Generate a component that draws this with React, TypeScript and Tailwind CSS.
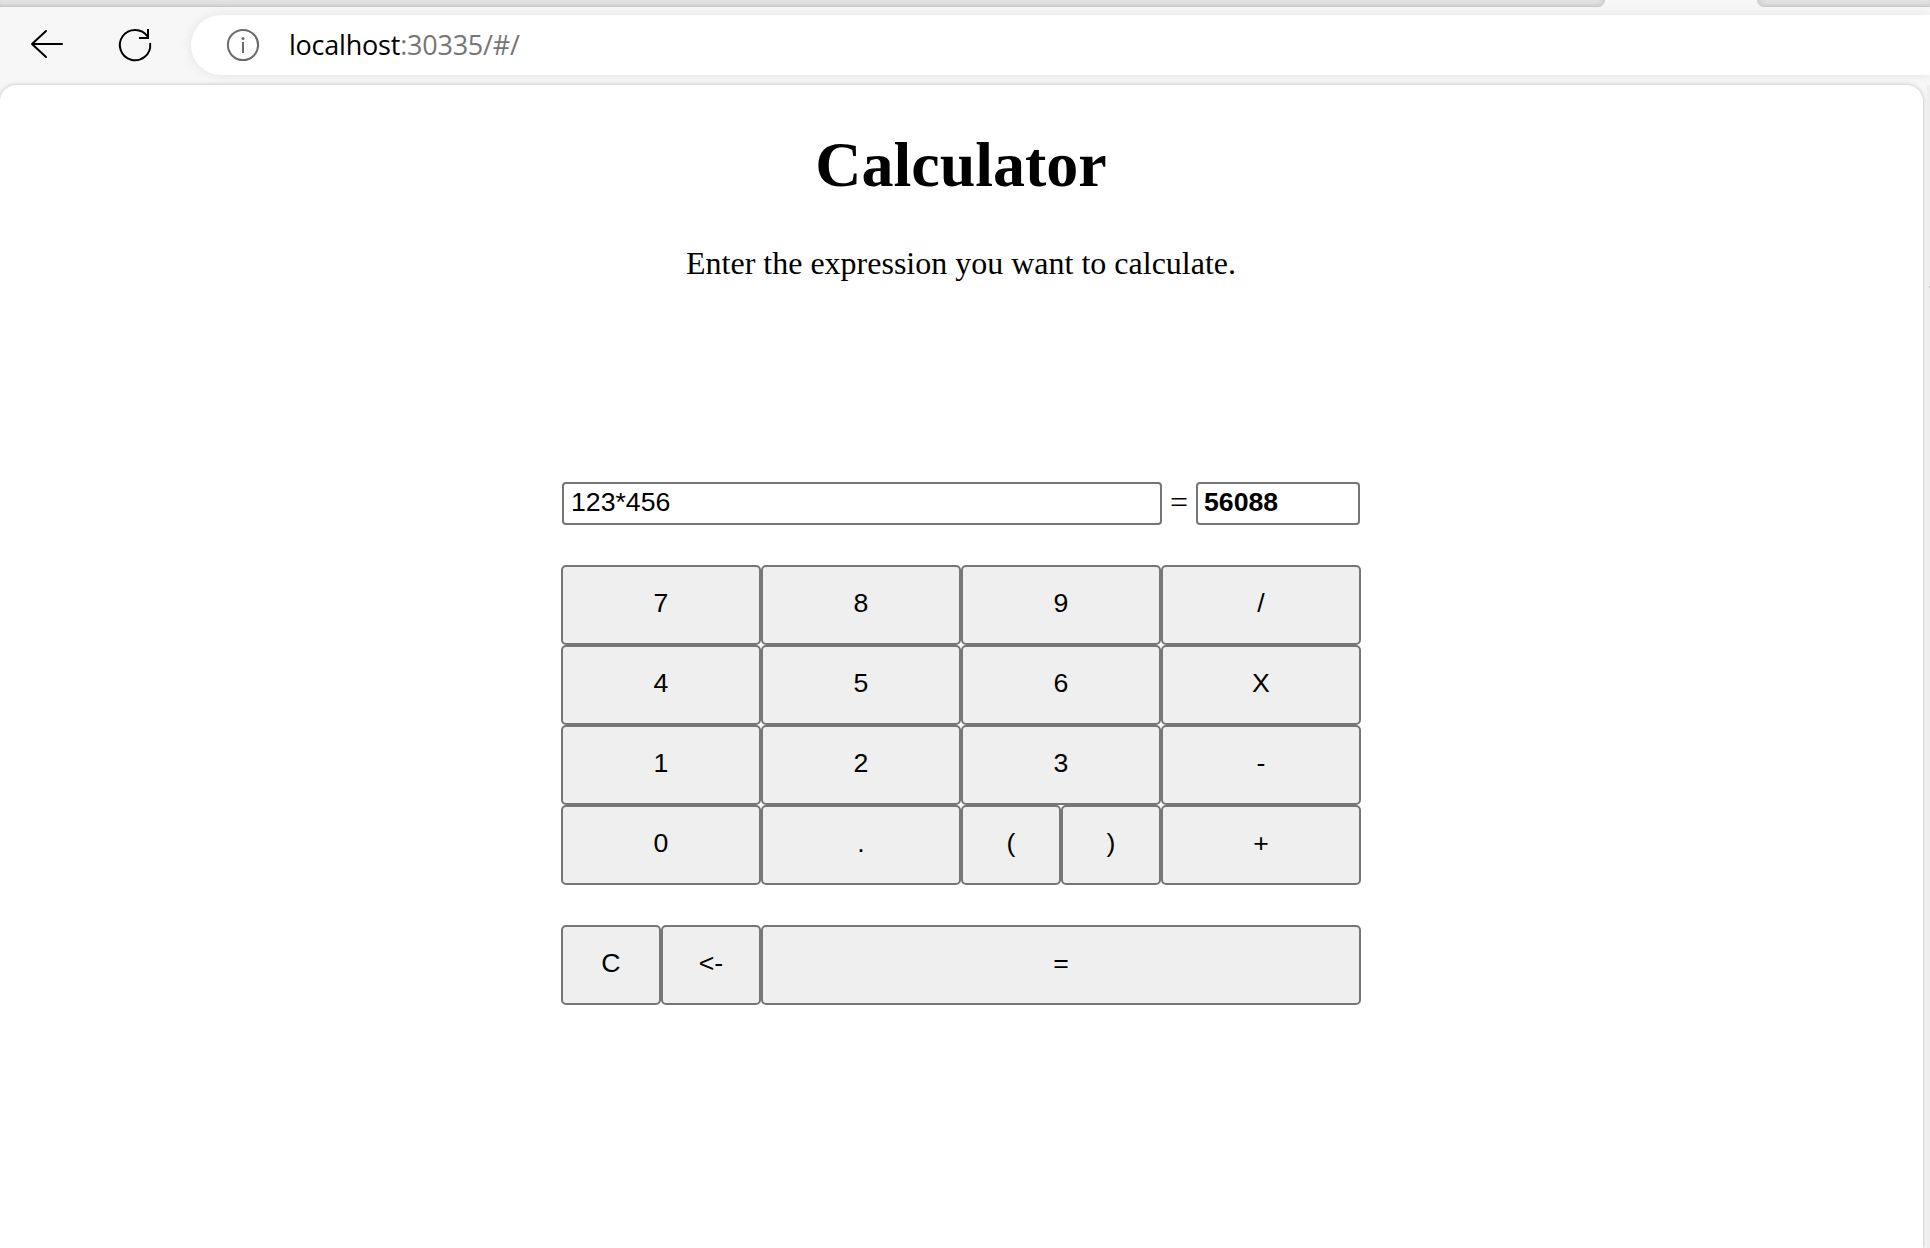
import React from "react";

const BUTTON =
  "flex h-20 items-center justify-center rounded-[5px] border-2 border-[#767676] bg-[#efefef] pb-[4px] text-black";

function Key({ label, span }: { label: string; span: string }) {
  return <button className={`${BUTTON} ${span}`}>{label}</button>;
}

const KEYS: [string, string][] = [
  ["7", "col-span-2"], ["8", "col-span-2"], ["9", "col-span-2"], ["/", "col-span-2"],
  ["4", "col-span-2"], ["5", "col-span-2"], ["6", "col-span-2"], ["X", "col-span-2"],
  ["1", "col-span-2"], ["2", "col-span-2"], ["3", "col-span-2"], ["-", "col-span-2"],
  ["0", "col-span-2"], [".", "col-span-2"], ["(", "col-span-1"], [")", "col-span-1"], ["+", "col-span-2"],
];

const ACTIONS: [string, string][] = [
  ["C", "col-span-1"],
  ["<-", "col-span-1"],
  ["=", "col-span-6"],
];

function TabStrip() {
  return (
    <div className="flex h-[7px] shrink-0 justify-between">
      <div className="h-full w-[1605px] rounded-br-[8px] border-b border-[#cacaca] bg-[#e6e6e6] shadow-[inset_-2px_-2px_4px_rgba(0,0,0,0.1)]" />
      <div className="h-full w-[173px] rounded-bl-[8px] border-b border-[#cacaca] bg-[#e6e6e6] shadow-[inset_2px_-2px_4px_rgba(0,0,0,0.1)]" />
    </div>
  );
}

function Toolbar() {
  return (
    <div className="flex h-[78px] shrink-0 pt-2">
      <svg className="mt-[10px] ml-[27px] h-10 w-10 shrink-0" viewBox="0 0 40 40" fill="none" stroke="#000" strokeWidth="2" strokeLinecap="round" strokeLinejoin="round">
        <path d="M5 19H35M19 6L5 19L19 32" />
      </svg>
      <svg className="mt-[10px] ml-12 h-10 w-10 shrink-0" viewBox="0 0 40 40" fill="none" stroke="#000" strokeWidth="2" strokeLinecap="round">
        <path d="M35.2 18.8A15.2 15.2 0 1 1 32.6 11.5" />
        <path d="M33 4V13H24" strokeLinecap="butt" strokeLinejoin="miter" />
      </svg>
      <div className="ml-9 flex h-[60px] flex-1 items-start rounded-l-full bg-white shadow-[0_0_12px_rgba(0,0,0,0.09)]">
        <svg className="mt-[10px] ml-8 h-10 w-10 shrink-0" viewBox="0 0 40 40" fill="none" stroke="#6b6b6b" strokeWidth="2">
          <circle cx="20" cy="20" r="15.1" />
          <path d="M20 17V28" />
          <circle cx="20" cy="13.5" r="1.5" fill="#6b6b6b" stroke="none" />
        </svg>
        <span className="mt-[10px] ml-[26px] font-['Open_Sans',sans-serif] text-[27px] leading-10 tracking-[-0.22px] whitespace-nowrap text-black">
          localhost<span className="text-[#767676]">:30335/#/</span>
        </span>
      </div>
    </div>
  );
}

export default function App() {
  return (
    <div className="flex h-[1248px] w-[1930px] flex-col overflow-hidden bg-[#f7f7f7]">
      <TabStrip />
      <Toolbar />
      <div className="flex min-h-0 flex-1">
        <main className="z-10 flex w-[1923px] flex-col items-center rounded-t-[16px] bg-white pr-px font-['Liberation_Serif',serif] text-black shadow-[0_0_4px_rgba(0,0,0,0.25)]">
          <h1 className="mt-[43px] text-[64px] leading-[74px] font-bold">Calculator</h1>
          <p className="mt-[43px] text-[32px] leading-[37px]">Enter the expression you want to calculate.</p>
          <div className="mt-[200px] flex h-[43px] w-[798px] items-center justify-between text-[26.667px]">
            <input readOnly value="123*456" className="h-[43px] w-[600px] rounded-[4px] border-2 border-[#767676] bg-white pr-[6px] pb-[3px] pl-[7px] font-['Liberation_Sans',sans-serif] outline-none" />
            <span className="pb-[4px] text-[32px] leading-10">=</span>
            <input readOnly value="56088" className="h-[43px] w-[164px] rounded-[4px] border-2 border-[#767676] bg-white px-[6px] pb-[3px] font-['Liberation_Sans',sans-serif] font-bold outline-none" />
          </div>
          <div className="mt-10 grid w-[800px] grid-cols-8 font-['Liberation_Sans',sans-serif] text-[26.667px]">
            {KEYS.map(([label, span]) => <Key key={label} label={label} span={span} />)}
          </div>
          <div className="mt-10 grid w-[800px] grid-cols-8 font-['Liberation_Sans',sans-serif] text-[26.667px]">
            {ACTIONS.map(([label, span]) => <Key key={label} label={label} span={span} />)}
          </div>
        </main>
        <aside className="ml-1 flex flex-1 justify-end bg-[#eeeeee]">
          <div className="mt-[201px] h-[2px] w-px bg-[#c4c4c4]" />
        </aside>
      </div>
    </div>
  );
}
